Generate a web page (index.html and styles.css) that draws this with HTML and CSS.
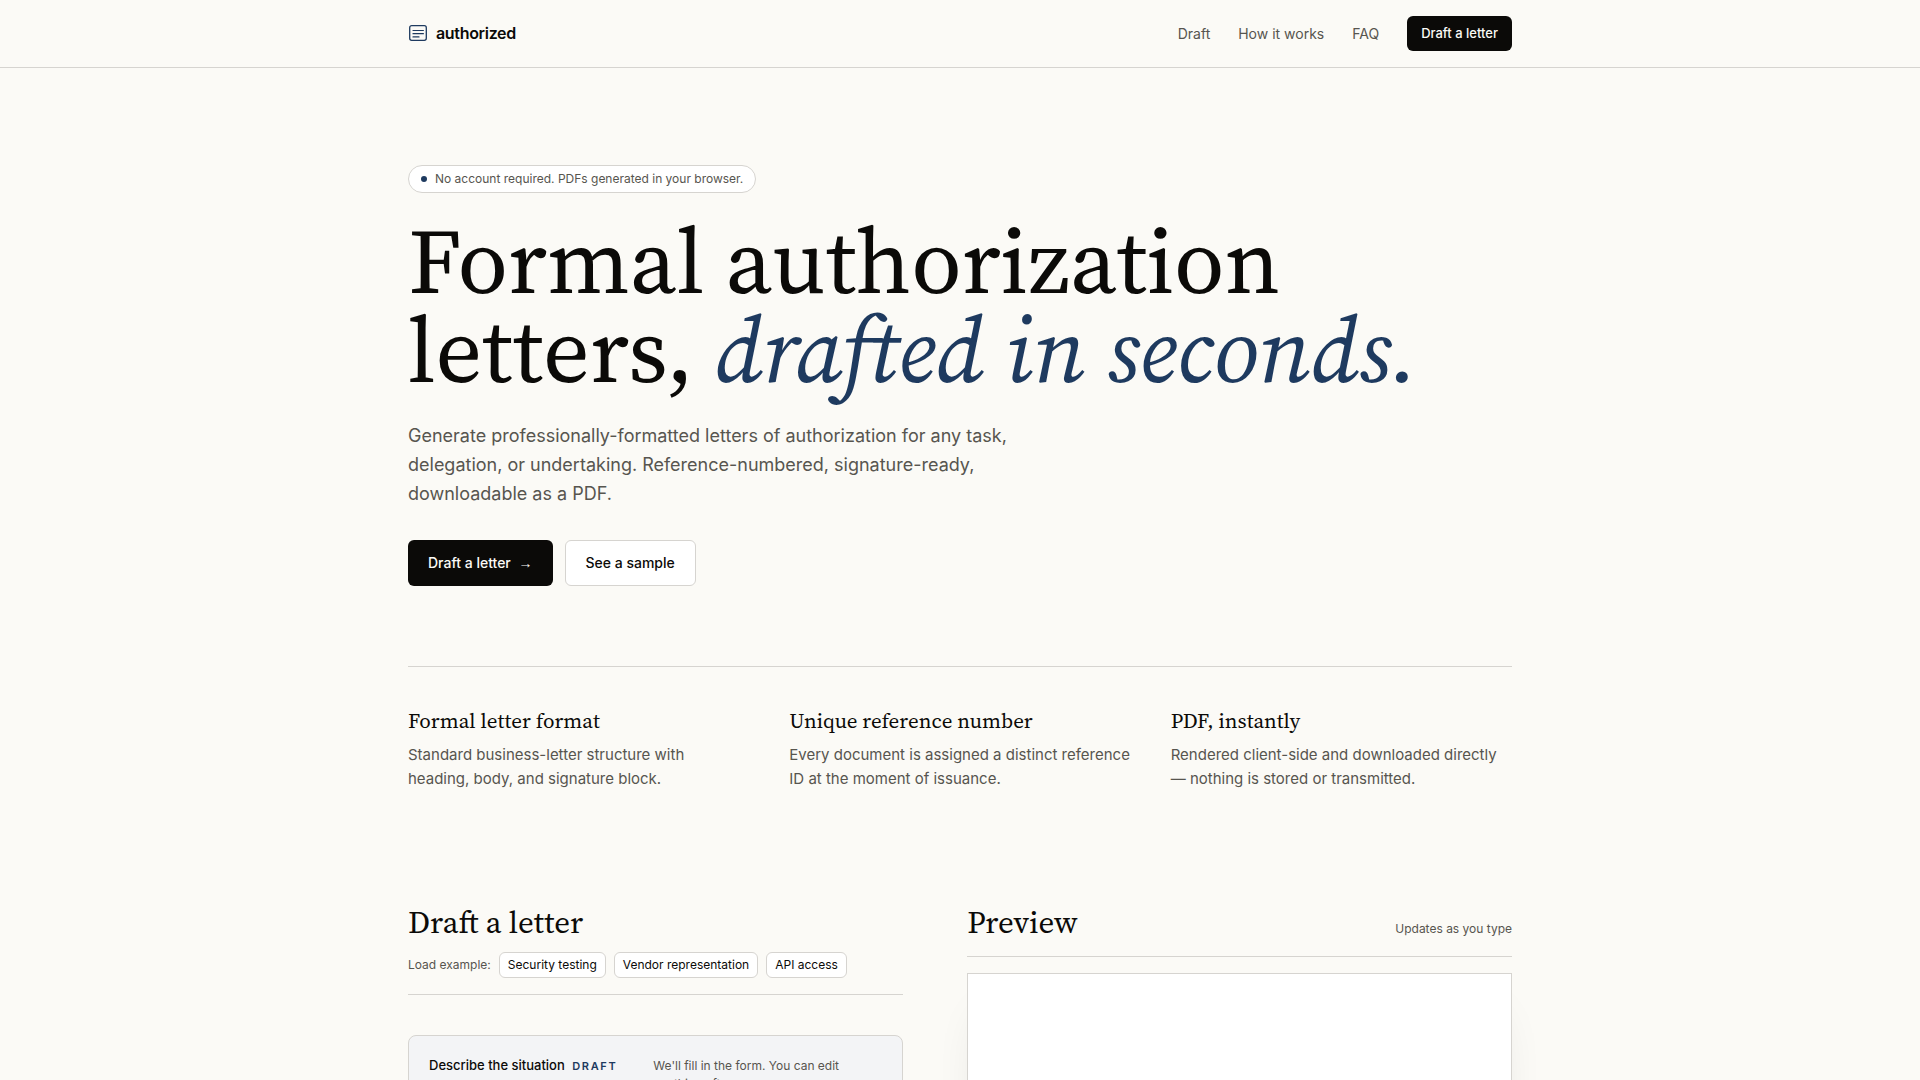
FILE: index.html
```html
<!DOCTYPE html>
<html lang="en">
<head>
<meta charset="utf-8">
<meta name="viewport" content="width=device-width, initial-scale=1">
<title>authorized</title>
<link rel="stylesheet" href="styles.css">
</head>
<body>
<header class="site-header">
  <div class="container site-header-inner">
    <a class="brand" href="#top">
      <svg class="brand-icon" width="20" height="20" viewBox="0 0 20 20" fill="none" stroke="currentColor" aria-hidden="true">
        <rect x="1.7" y="2.7" width="16.6" height="14.6" rx="2" stroke-width="1.3"/>
        <path d="M5 7.5h10.4M5 10.7h10.4M5 13.9h6" stroke-width="1.2" stroke-linecap="round"/>
      </svg>
      authorized
    </a>
    <nav class="nav">
      <a class="nav-link" href="#draft">Draft</a>
      <a class="nav-link" href="#how">How it works</a>
      <a class="nav-link" href="#faq">FAQ</a>
      <a class="nav-cta" href="#draft">Draft a letter</a>
    </nav>
  </div>
</header>

<main class="container" id="top">
  <section class="hero">
    <p class="badge"><span class="badge-dot"></span>No account required. PDFs generated in your browser.</p>
    <h1 class="hero-title">Formal authorization<br>letters, <em>drafted in seconds.</em></h1>
    <p class="hero-lead">Generate professionally-formatted letters of authorization for any task, delegation, or undertaking. Reference-numbered, signature-ready, downloadable as a PDF.</p>
    <div class="hero-actions">
      <button class="button button-primary" type="button">Draft a letter <span class="button-arrow">→</span></button>
      <button class="button button-secondary" type="button">See a sample</button>
    </div>
  </section>

  <section class="features" id="how">
    <article>
      <h3 class="feature-title">Formal letter format</h3>
      <p class="feature-text">Standard business-letter structure with heading, body, and signature block.</p>
    </article>
    <article>
      <h3 class="feature-title">Unique reference number</h3>
      <p class="feature-text">Every document is assigned a distinct reference ID at the moment of issuance.</p>
    </article>
    <article>
      <h3 class="feature-title">PDF, instantly</h3>
      <p class="feature-text">Rendered client-side and downloaded directly — nothing is stored or transmitted.</p>
    </article>
  </section>

  <div class="workspace" id="draft">
    <section>
      <div class="draft-head">
        <h2 class="section-title">Draft a letter</h2>
        <div class="examples">
          <span class="small-note">Load example:</span>
          <button class="chip" type="button">Security testing</button>
          <button class="chip" type="button">Vendor representation</button>
          <button class="chip" type="button">API access</button>
        </div>
      </div>
      <div class="describe">
        <h3 class="describe-title">Describe the situation <span class="describe-tag">DRAFT</span></h3>
        <p class="small-note">We'll fill in the form. You can edit anything after.</p>
      </div>
    </section>
    <section>
      <div class="preview-head">
        <h2 class="section-title">Preview</h2>
        <span class="small-note">Updates as you type</span>
      </div>
      <div class="paper"></div>
    </section>
  </div>
</main>
</body>
</html>
```
FILE: styles.css
```css
:root {
  --ink: #0b0a08;
  --muted: #57554f;
  --navy: #1e3a5f;
  --line: #d6d4d0;
  --page: #fbfaf6;
  --sans: Inter, "Liberation Sans", sans-serif;
  --serif: "Source Serif 4", "DejaVu Serif Condensed", "DejaVu Serif", serif;
}

* { box-sizing: border-box; }

body {
  margin: 0;
  background: var(--page);
  color: var(--ink);
  font-family: var(--sans);
  font-size: 16px;
}

h1, h2, h3, p { margin: 0; }
a { color: inherit; text-decoration: none; }
button { font-family: inherit; cursor: pointer; }

.container {
  max-width: 1152px;
  margin: 0 auto;
  padding: 0 24px;
}

.site-header { border-bottom: 1px solid var(--line); }

.site-header-inner {
  display: flex;
  align-items: center;
  justify-content: space-between;
  padding-top: 16px;
  padding-bottom: 16px;
}

.brand {
  display: flex;
  align-items: center;
  gap: 8px;
  padding-bottom: 1px;
  font-weight: 600;
  line-height: 20px;
  letter-spacing: -0.02em;
}

.brand-icon { color: var(--navy); }

.nav {
  display: flex;
  align-items: center;
  gap: 28px;
}

.nav-link {
  color: var(--muted);
  font-size: 14px;
}

.nav-cta {
  padding: 8px 14px;
  border-radius: 6px;
  background: var(--ink);
  color: var(--page);
  font-size: 13px;
  font-weight: 500;
  line-height: 19px;
}

.hero { padding: 97px 0 80px; }

.badge {
  display: inline-flex;
  align-items: center;
  gap: 8px;
  padding: 5px 12px;
  border: 1px solid var(--line);
  border-radius: 14px;
  background: #fff;
  color: var(--muted);
  font-size: 12px;
  line-height: 16px;
}

.badge-dot {
  width: 6px;
  height: 6px;
  border-radius: 50%;
  background: var(--navy);
}

.hero-title {
  margin-top: 24px;
  font-family: var(--serif);
  font-size: 92px;
  font-weight: 400;
  line-height: 89px;
}

.hero-title em { color: var(--navy); }

.hero-lead {
  max-width: 620px;
  margin-top: 26px;
  color: var(--muted);
  font-size: 18px;
  line-height: 29px;
}

.hero-actions {
  display: flex;
  gap: 12px;
  margin-top: 32px;
}

.button {
  padding: 12px 20px;
  border: 0;
  border-radius: 6px;
  font-size: 14px;
  font-weight: 500;
  line-height: 20px;
}

.button-primary {
  background: var(--ink);
  color: var(--page);
}

.button-secondary {
  border: 1px solid var(--line);
  background: #fff;
  color: var(--ink);
}

.button-arrow {
  margin-left: 4px;
  font-family: "Liberation Sans", sans-serif;
}

.features {
  display: grid;
  grid-template-columns: repeat(3, 1fr);
  gap: 40px;
  padding: 40px 0 111px;
  border-top: 1px solid var(--line);
}

.feature-title {
  font-family: var(--serif);
  font-size: 21px;
  font-weight: 400;
  line-height: 28px;
}

.feature-text {
  margin-top: 8px;
  color: var(--muted);
  font-size: 15px;
  line-height: 24px;
}

.workspace {
  display: grid;
  grid-template-columns: 1fr 1.1fr;
  gap: 64px;
}

.section-title {
  font-family: var(--serif);
  font-size: 31px;
  font-weight: 400;
  line-height: 40px;
}

.draft-head {
  padding-bottom: 16px;
  border-bottom: 1px solid var(--line);
}

.examples {
  display: flex;
  flex-wrap: wrap;
  align-items: center;
  gap: 8px;
  margin-top: 10px;
}

.small-note {
  color: var(--muted);
  font-size: 12px;
  line-height: 18px;
}

.chip {
  padding: 4px 8px;
  border: 1px solid var(--line);
  border-radius: 6px;
  background: #fff;
  color: var(--ink);
  font-size: 12px;
  line-height: 16px;
}

.describe {
  display: grid;
  grid-template-columns: auto 1fr;
  align-items: baseline;
  gap: 36px;
  min-height: 280px;
  margin-top: 40px;
  padding: 20px;
  border: 1px solid var(--line);
  border-radius: 8px;
  background: #f3f4f6;
}

.describe-title {
  font-size: 13px;
  font-weight: 500;
  line-height: 19px;
}

.describe-tag {
  margin-left: 4px;
  color: var(--navy);
  font-size: 11px;
  font-weight: 600;
  letter-spacing: 0.15em;
}

.preview-head {
  display: flex;
  align-items: baseline;
  justify-content: space-between;
  padding-bottom: 14px;
  border-bottom: 1px solid var(--line);
}

.paper {
  min-height: 640px;
  margin-top: 16px;
  border: 1px solid var(--line);
  background: #fff;
  box-shadow: 0 24px 48px -24px rgba(11, 10, 8, 0.16);
}
```
